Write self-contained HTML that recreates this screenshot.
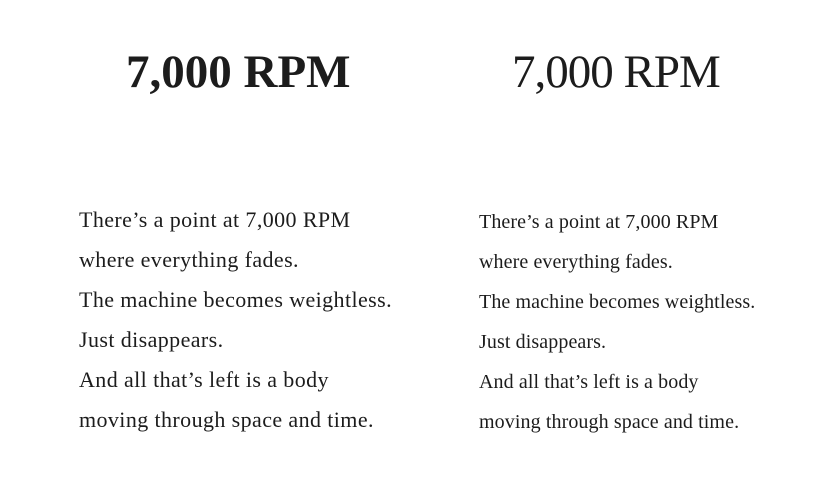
<!DOCTYPE html>
<html><head><meta charset="utf-8"><style>
body{margin:0;width:834px;height:500px;background:#fff;color:#1c1c1c;font-family:"Liberation Serif",serif;position:relative;overflow:hidden}
h1{position:absolute;margin:0;top:44px;font-size:47px;line-height:56px;white-space:nowrap}
.l{left:126px;font-weight:bold;}
.r{left:512px;font-weight:normal;letter-spacing:-1px;font-size:47px}
.p{position:absolute;white-space:nowrap;line-height:40px}
.pl{left:79px;top:200px;font-size:22px;letter-spacing:0.4px}
.pr{left:479px;top:202px;font-size:20px;letter-spacing:0.1px}
</style></head><body>
<h1 class="l">7,000 RPM</h1>
<h1 class="r">7,000 RPM</h1>
<div class="p pl">There’s a point at 7,000 RPM<br>where everything fades.<br>The machine becomes weightless.<br>Just disappears.<br>And all that’s left is a body<br>moving through space and time.</div>
<div class="p pr">There’s a point at 7,000 RPM<br>where everything fades.<br>The machine becomes weightless.<br>Just disappears.<br>And all that’s left is a body<br>moving through space and time.</div>
</body></html>
